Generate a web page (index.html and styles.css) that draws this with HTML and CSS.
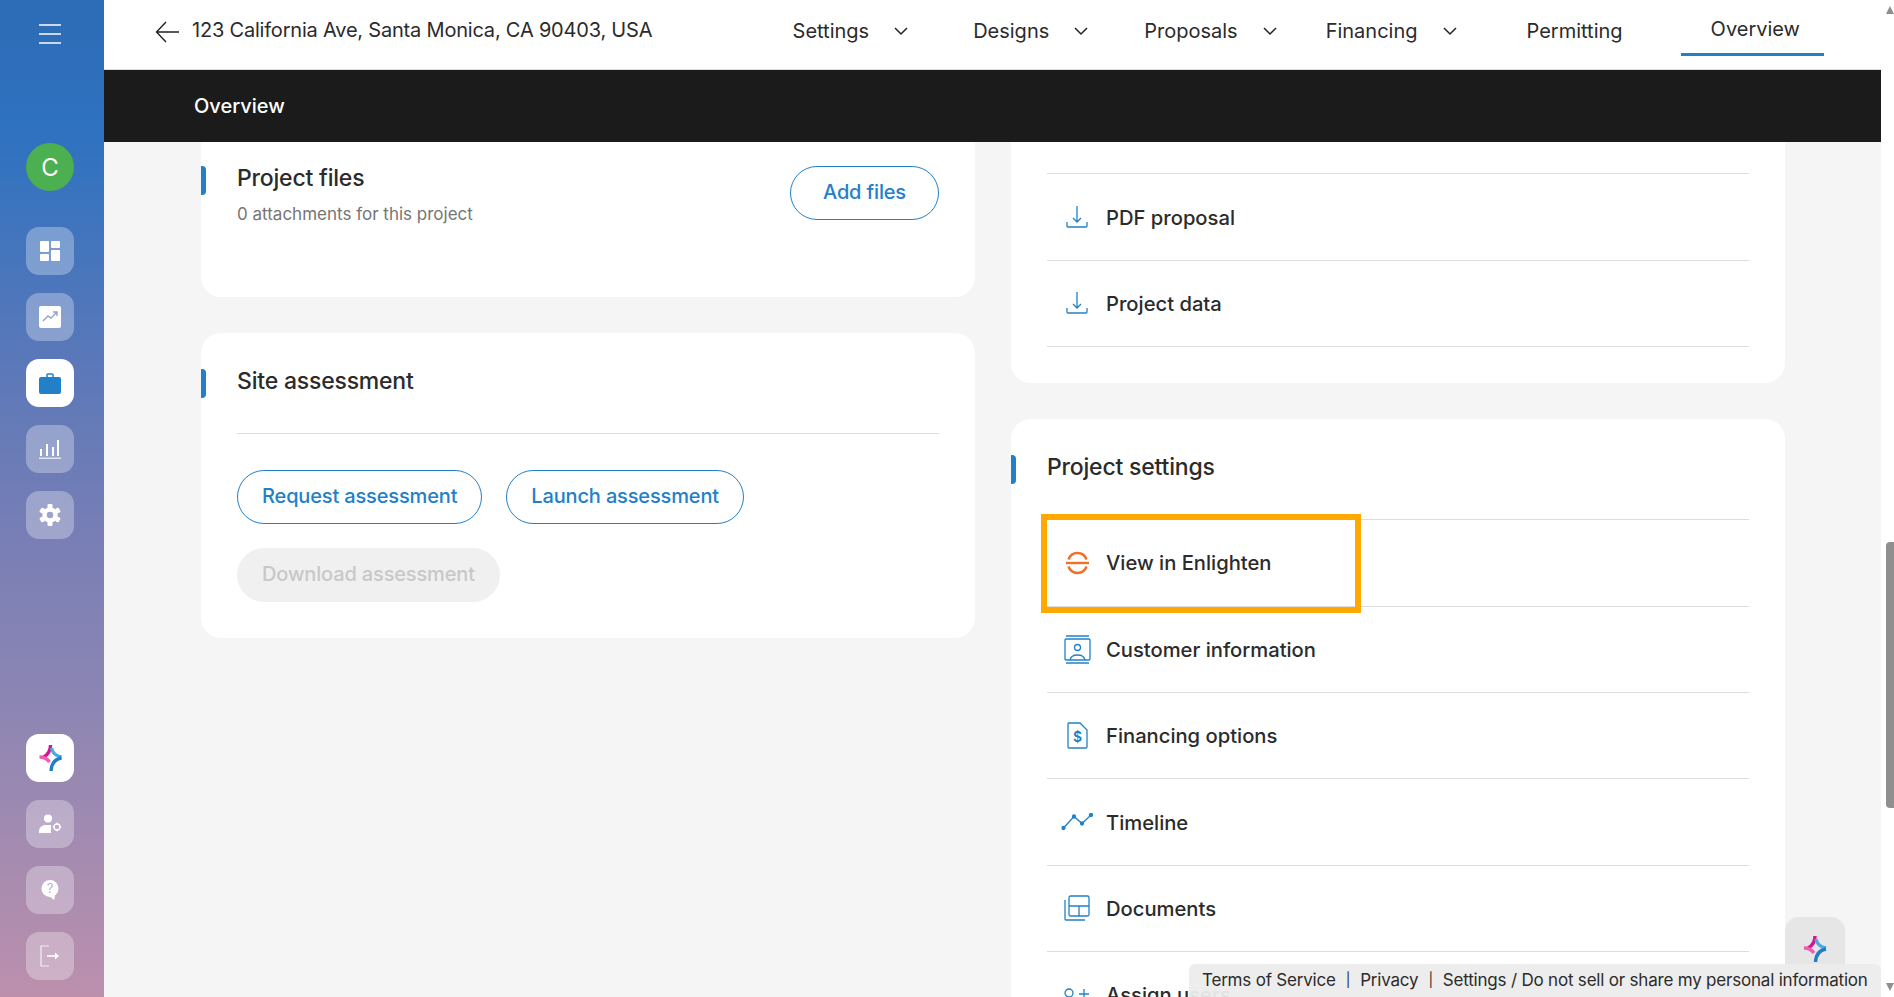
FILE: index.html
```html
<!DOCTYPE html>
<html lang="en">
<head>
  <meta charset="UTF-8" />
  <meta name="viewport" content="width=device-width, initial-scale=1.0" />
  <title>Project overview</title>
  <link rel="stylesheet" href="styles.css">
</head>
<body>
  <aside class="sidebar">
    <div class="menu-btn"><span></span><span></span><span></span></div>
    <div class="avatar">C</div>
    <div class="side-group">
      <div class="side-btn">
        <svg width="20" height="20" viewBox="0 0 20 20" fill="#fff"><rect width="9" height="11" rx="1"/><rect y="13" width="9" height="7" rx="1"/><rect x="11" width="9" height="7" rx="1"/><rect x="11" y="9" width="9" height="11" rx="1"/></svg>
      </div>
      <div class="side-btn">
        <svg width="22" height="22" viewBox="0 0 22 22"><rect width="22" height="22" rx="2" fill="#fff"/><path d="M4 15l5-5 3 2 6-6M14 6h4v4" fill="none" stroke="#8ea5d0" stroke-width="1.4"/></svg>
      </div>
      <div class="side-btn active">
        <svg width="22" height="21" viewBox="0 0 22 21"><path d="M8 4V2q0-1 1-1h4q1 0 1 1v2" fill="none" stroke="#2280c8" stroke-width="1.5"/><rect y="4" width="22" height="17" rx="2" fill="#2280c8"/></svg>
      </div>
      <div class="side-btn">
        <svg width="22" height="20" viewBox="0 0 22 20" fill="#fff"><rect x="1" y="10" width="2" height="7"/><rect x="7" y="5" width="2" height="12"/><rect x="13" y="8" width="2" height="9"/><rect x="18" y="1" width="2" height="16"/><rect y="18.500" width="22" height="1.500" opacity=".7"/></svg>
      </div>
      <div class="side-btn">
        <svg width="22" height="22" viewBox="0 0 22 22" fill="#fff"><circle cx="11" cy="11" r="5.500" fill="none" stroke="#fff" stroke-width="4.500"/><g><rect x="8.500" y="0" width="5" height="4" rx="1"/><rect x="8.500" y="18" width="5" height="4" rx="1"/><rect x="8.500" y="0" width="5" height="4" rx="1" transform="rotate(60 11 11)"/><rect x="8.500" y="18" width="5" height="4" rx="1" transform="rotate(60 11 11)"/><rect x="8.500" y="0" width="5" height="4" rx="1" transform="rotate(120 11 11)"/><rect x="8.500" y="18" width="5" height="4" rx="1" transform="rotate(120 11 11)"/></g></svg>
      </div>
    </div>
    <div class="side-group side-bottom">
      <div class="side-btn active">
        <svg width="25" height="28" viewBox="0 0 24 28" fill="none" stroke-width="3.400"><path d="M12 1C12 7 9 11 5 13" stroke="#d6168b"/><path d="M1 13C6 13 9 15 11 18" stroke="#f15bb5"/><path d="M13 4C14 9 17 12 23 13" stroke="#4aa8e8"/><path d="M23 14C17 15 13 19 12.500 27" stroke="#1f7fc4"/></svg>
      </div>
      <div class="side-btn">
        <svg width="24" height="20" viewBox="0 0 24 20"><circle cx="10" cy="4.500" r="4" fill="#fff"/><path d="M1 19v-2q0-4 5-6h7v8z" fill="#fff"/><circle cx="19" cy="13" r="3" fill="none" stroke="#fff" stroke-width="1.300"/><path d="M19 8.500v2M19 15.500v2M14.500 13h2M21.500 13h2" stroke="#fff"/></svg>
      </div>
      <div class="side-btn">
        <svg width="18" height="20" viewBox="0 0 18 20"><circle cx="9" cy="8.500" r="8.500" fill="#fff"/><path d="M8 16l5 4q1-2 1-5z" fill="#fff"/><text x="9" y="13" class="help-mark">?</text></svg>
      </div>
      <div class="side-btn">
        <svg width="20" height="22" viewBox="0 0 20 22" fill="none" stroke="#fff" stroke-width="1.200"><path d="M9 1H1v20h8" opacity=".8"/><path d="M7 11h10" stroke-width="1.600"/><path d="M15 7.500l4 3.500-4 3.500z" fill="#fff" stroke="none"/></svg>
      </div>
    </div>
  </aside>

  <div class="main">
    <header class="topbar">
      <svg class="back" width="24" height="22" viewBox="0 0 24 22" fill="none" stroke="#222" stroke-width="1.400"><path d="M24 11H2M11 1L1.500 11 11 21"/></svg>
      <div class="address">123 California Ave, Santa Monica, CA 90403, USA</div>
      <nav class="nav">
        <div class="nav-item">Settings <svg width="14" height="9" viewBox="0 0 14 9" fill="none" stroke="#222" stroke-width="1.500"><path d="M1 1l6 6 6-6"/></svg></div>
        <div class="nav-item">Designs <svg width="14" height="9" viewBox="0 0 14 9" fill="none" stroke="#222" stroke-width="1.500"><path d="M1 1l6 6 6-6"/></svg></div>
        <div class="nav-item">Proposals <svg width="14" height="9" viewBox="0 0 14 9" fill="none" stroke="#222" stroke-width="1.500"><path d="M1 1l6 6 6-6"/></svg></div>
        <div class="nav-item">Financing <svg width="14" height="9" viewBox="0 0 14 9" fill="none" stroke="#222" stroke-width="1.500"><path d="M1 1l6 6 6-6"/></svg></div>
        <div class="nav-item">Permitting</div>
        <div class="nav-item current">Overview</div>
      </nav>
    </header>

    <div class="band">Overview</div>

    <div class="content">
      <div class="columns">
        <div class="col">
          <section class="card files-card">
            <div class="files-head">
              <div>
                <h2 class="card-title">Project files</h2>
                <div class="card-sub">0 attachments for this project</div>
              </div>
              <button class="pill pill-wide">Add files</button>
            </div>
          </section>
          <section class="card">
            <div class="card-head"><h2 class="card-title">Site assessment</h2></div>
            <div class="pill-row">
              <button class="pill">Request assessment</button>
              <button class="pill">Launch assessment</button>
              <button class="pill disabled">Download assessment</button>
            </div>
          </section>
        </div>

        <div class="col">
          <section class="card links-card">
            <div class="row">
              <span class="row-icon"><svg width="22" height="22" viewBox="0 0 22 22" fill="none" stroke="#2280c8" stroke-width="1.300"><path d="M11 0v16M7 12l4 4 4-4M1 16v4q0 1 1 1h18q1 0 1-1v-4"/></svg></span>
            </div>
            <div class="row">
              <span class="row-icon"><svg width="22" height="22" viewBox="0 0 22 22" fill="none" stroke="#2280c8" stroke-width="1.300"><path d="M11 0v16M7 12l4 4 4-4M1 16v4q0 1 1 1h18q1 0 1-1v-4"/></svg></span>
              PDF proposal
            </div>
            <div class="row">
              <span class="row-icon"><svg width="22" height="22" viewBox="0 0 22 22" fill="none" stroke="#2280c8" stroke-width="1.300"><path d="M11 0v16M7 12l4 4 4-4M1 16v4q0 1 1 1h18q1 0 1-1v-4"/></svg></span>
              Project data
            </div>
          </section>

          <section class="card">
            <div class="card-head"><h2 class="card-title">Project settings</h2></div>
            <div class="row marked">
              <span class="row-icon"><svg width="23" height="24" viewBox="0 0 23 24" fill="none" stroke="#f26f26" stroke-width="2.400"><path d="M2.500 8.500a9.500 9.500 0 0 1 18 0M2.500 15.500a9.500 9.500 0 0 0 18 0"/><path d="M0 12h23"/></svg></span>
              View in Enlighten
            </div>
            <div class="row">
              <span class="row-icon"><svg width="27" height="29" viewBox="0 0 27 29" fill="none" stroke="#2280c8" stroke-width="1.300"><path d="M2 1h23M2 28h23"/><rect x="1" y="4" width="25" height="21" rx="1"/><circle cx="13.500" cy="12.500" r="3"/><path d="M6 25q1-5 7.500-5T21 25"/></svg></span>
              Customer information
            </div>
            <div class="row">
              <span class="row-icon"><svg width="21" height="27" viewBox="0 0 21 27" fill="none" stroke="#2280c8" stroke-width="1.300"><path d="M2 1h11l7 7v17q0 1-1 1H2q-1 0-1-1V2q0-1 1-1z"/><text x="10.500" y="20" class="doc-mark">$</text></svg></span>
              Financing options
            </div>
            <div class="row">
              <span class="row-icon"><svg width="32" height="18" viewBox="0 0 32 18" fill="#2280c8" stroke="#2280c8" stroke-width="1.300"><path d="M2.500 15L13 3.500l8 7L30 2" fill="none"/><circle cx="2.500" cy="15" r="1.500"/><circle cx="13" cy="3.500" r="1.500"/><circle cx="21" cy="10.500" r="1.500"/><circle cx="30" cy="2" r="1.500"/></svg></span>
              Timeline
            </div>
            <div class="row">
              <span class="row-icon"><svg width="26" height="26" viewBox="0 0 26 26" fill="none" stroke="#2280c8" stroke-width="1.300"><rect x="5" y="1" width="20" height="20" rx="1.500"/><path d="M5 11h20M15 11v10M1 5v19q0 1 1 1h19"/></svg></span>
              Documents
            </div>
            <div class="row">
              <span class="row-icon"><svg width="26" height="14" viewBox="0 0 26 14" fill="none" stroke="#2280c8" stroke-width="1.300"><circle cx="5" cy="5" r="4"/><path d="M20 1v10M15 6h10"/></svg></span>
              Assign users
            </div>
          </section>
        </div>
      </div>

      <div class="float-btn">
        <svg width="24" height="28" viewBox="0 0 24 28" fill="none" stroke-width="3.400"><path d="M12 1C12 7 9 11 5 13" stroke="#d6168b"/><path d="M1 13C6 13 9 15 11 18" stroke="#f15bb5"/><path d="M13 4C14 9 17 12 23 13" stroke="#4aa8e8"/><path d="M23 14C17 15 13 19 12.500 27" stroke="#1f7fc4"/></svg>
      </div>
      <footer class="legal">
        <span>Terms of Service</span><i>|</i><span>Privacy</span><i>|</i><span>Settings / Do not sell or share my personal information</span>
      </footer>
    </div>
  </div>

  <div class="scrollbar">
    <div class="arrow up"></div>
    <div class="thumb"></div>
    <div class="arrow down"></div>
  </div>
</body>
</html>
```

FILE: styles.css
```css
* {
  box-sizing: border-box;
}
html, body {
  height: 100%;
}
body {
  margin: 0;
  display: flex;
  height: 997px;
  overflow: hidden;
  font-family: "Inter", "Liberation Sans", sans-serif;
  color: #2b2b2b;
  background-color: #f5f5f5;
}
.sidebar {
  width: 104px;
  flex: none;
  display: flex;
  flex-direction: column;
  align-items: center;
  padding: 0 4px 17px 0;
  background: linear-gradient(180deg, #2d6cb6 0%, #2f72c0 14%, #5a78b9 36%, #7a7fb5 55%, #8e86b3 72%, #bc90ad 100%);
}
.menu-btn {
  display: flex;
  flex-direction: column;
  gap: 7px;
  width: 22px;
  margin-top: 24px;
}
.menu-btn span {
  height: 2px;
  background-color: #c9d8ec;
}
.avatar {
  width: 48px;
  height: 48px;
  margin-top: 99px;
  border-radius: 50%;
  background-color: #4caf50;
  color: #fff;
  font-size: 24px;
  display: flex;
  align-items: center;
  justify-content: center;
}
.side-group {
  display: flex;
  flex-direction: column;
  gap: 18px;
  margin-top: 36px;
}
.side-bottom {
  margin-top: auto;
}
.side-btn {
  width: 48px;
  height: 48px;
  border-radius: 13px;
  background-color: rgba(255, 255, 255, 0.3);
  display: flex;
  align-items: center;
  justify-content: center;
}
.side-btn.active {
  background-color: #fff;
}
.help-mark {
  font-size: 13px;
  text-anchor: middle;
  fill: #c3aec8;
}
.doc-mark {
  font-size: 14px;
  font-weight: 600;
  text-anchor: middle;
  fill: #2280c8;
  stroke: none;
}

.main {
  flex: 1;
  min-width: 0;
  display: flex;
  flex-direction: column;
}
.topbar {
  height: 70px;
  flex: none;
  display: flex;
  align-items: flex-start;
  padding: 0 57px 0 51px;
  background-color: #fff;
  border-bottom: 1px solid #ddd;
}
.back {
  margin-top: 21px;
  flex: none;
}
.address {
  margin-left: 13px;
  line-height: 60px;
  font-size: 20px;
  letter-spacing: -0.2px;
}
.nav {
  display: flex;
  margin-left: auto;
  font-size: 20px;
}
.nav-item {
  height: 56px;
  padding-top: 6px;
  display: flex;
  align-items: center;
  gap: 25px;
}
.nav-item:nth-child(2) {
  margin-left: 65px;
}
.nav-item:nth-child(3) {
  margin-left: 56px;
}
.nav-item:nth-child(4) {
  margin-left: 49px;
}
.nav-item:nth-child(5) {
  margin-left: 70px;
}
.nav-item.current {
  margin-left: 58px;
  padding: 5px 24px 0 30px;
  border-bottom: 3px solid #2280c8;
}
.band {
  height: 72px;
  flex: none;
  padding-left: 90px;
  line-height: 72px;
  font-size: 20px;
  font-weight: 500;
  color: #fff;
  background-color: #1b1b1b;
}
.content {
  flex: 1;
  position: relative;
  overflow: hidden;
}
.columns {
  display: grid;
  grid-template-columns: 1fr 1fr;
  gap: 36px;
  margin-top: -100px;
  padding: 0 96px 0 97px;
}
.col {
  display: flex;
  flex-direction: column;
  gap: 36px;
}
.card {
  position: relative;
  padding: 36px 36px 0;
  border-radius: 20px;
  background-color: #fff;
}
.files-card {
  padding: 124px 36px 71px 36px;
}
.links-card {
  padding-top: 46px;
  padding-bottom: 36px;
}
.files-head {
  display: flex;
  justify-content: space-between;
  align-items: flex-start;
}
.card-head {
  height: 65px;
  border-bottom: 1px solid #ddd;
}
.card-title {
  margin: 0;
  font-size: 23px;
  line-height: 24px;
  font-weight: 500;
  letter-spacing: -0.2px;
}
.card-title::before {
  content: "";
  position: absolute;
  left: 0;
  width: 5px;
  height: 29px;
  border-radius: 0 4px 4px 0;
  background-color: #2280c8;
}
.card-sub {
  margin-top: 12px;
  line-height: 24px;
  font-size: 17px;
  color: #757575;
}
.pill {
  height: 54px;
  padding: 0 24px 2px;
  border: 1px solid #2280c8;
  border-radius: 27px;
  background-color: #fff;
  color: #2280c8;
  font-family: inherit;
  font-size: 20px;
  font-weight: 500;
  letter-spacing: -0.15px;
}
.pill-wide {
  padding: 0 32px 2px;
}
.pill.disabled {
  border-color: #f0f0f0;
  background-color: #f0f0f0;
  color: #c8c8c8;
}
.pill-row {
  display: flex;
  flex-wrap: wrap;
  gap: 24px;
  padding: 36px 0;
}
.row {
  position: relative;
  height: 86.4px;
  display: flex;
  align-items: center;
  border-bottom: 1px solid #ddd;
  font-size: 20.2px;
  font-weight: 500;
}
.row-icon {
  width: 60px;
  margin-right: -1px;
  display: flex;
  justify-content: center;
}
.marked::after {
  content: "";
  position: absolute;
  box-sizing: border-box;
  left: -6px;
  top: -6px;
  width: 320px;
  height: 99px;
  border: 6px solid #ffa800;
}
.float-btn {
  position: absolute;
  right: 36px;
  bottom: 20px;
  width: 60px;
  height: 60px;
  border-radius: 14px;
  background-color: #e6e6e6;
  display: flex;
  align-items: center;
  justify-content: center;
  padding-top: 4px;
}
.legal {
  position: absolute;
  right: 0;
  bottom: 0;
  width: 692px;
  height: 33px;
  padding: 0 0 2px 13px;
  display: flex;
  align-items: center;
  gap: 10px;
  border-radius: 6px 6px 0 0;
  background-color: rgba(236, 236, 236, 0.95);
  font-size: 17px;
  letter-spacing: -0.2px;
  white-space: nowrap;
}
.legal i {
  font-style: normal;
  font-size: 14px;
}
.scrollbar {
  width: 13px;
  flex: none;
  display: flex;
  flex-direction: column;
  align-items: flex-end;
  background-color: #fff;
}
.arrow {
  width: 0;
  height: 0;
  border-left: 4px solid transparent;
  border-right: 4px solid transparent;
}
.arrow.up {
  margin-top: 6px;
  border-bottom: 8px solid #8f8f8f;
}
.thumb {
  width: 8px;
  height: 266px;
  margin-top: 528px;
  border-radius: 4px 0 0 4px;
  background-color: #8f8f8f;
}
.arrow.down {
  margin-top: auto;
  margin-bottom: 6px;
  border-top: 8px solid #8f8f8f;
}
```
